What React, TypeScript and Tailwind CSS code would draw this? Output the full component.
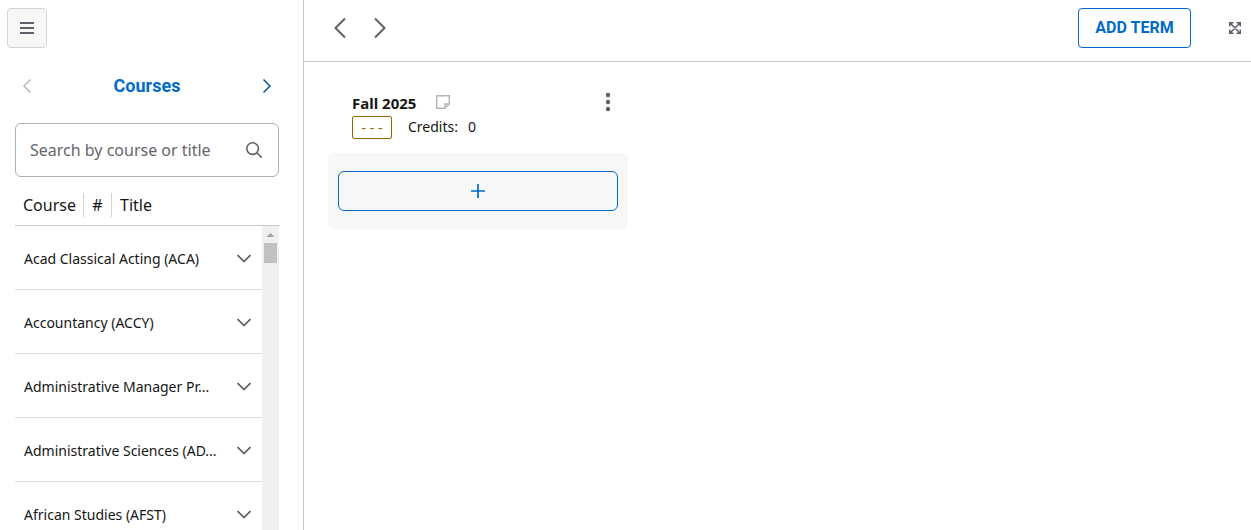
import React, { useState } from 'react';

const subjects = [
  'Acad Classical Acting (ACA)',
  'Accountancy (ACCY)',
  'Administrative Manager Pr...',
  'Administrative Sciences (AD...',
  'African Studies (AFST)',
];

type ChevronProps = {
  points: string;
  className: string;
  viewBox: string;
  strokeWidth?: number;
};

function Chevron({ points, className, viewBox, strokeWidth = 2 }: ChevronProps) {
  return (
    <svg className={className} viewBox={viewBox} fill="none" stroke="currentColor" strokeWidth={strokeWidth} aria-hidden="true">
      <polyline points={points} />
    </svg>
  );
}

function ListScrollbar() {
  return (
    <div className="flex w-[17px] shrink-0 flex-col items-center bg-[#f0f0f0]" aria-hidden="true">
      <svg className="h-[17px] w-[17px]" viewBox="0 0 17 17" fill="#a3a3a3">
        <path d="M8.5 7 L12.5 11 H4.5 Z" />
      </svg>
      <div className="h-5 w-[13px] bg-[#c1c1c1]" />
    </div>
  );
}

function Sidebar() {
  const [query, setQuery] = useState('');

  return (
    <aside className="flex w-[304px] shrink-0 flex-col border-r border-[#c7c7c7]">
      <div className="px-[7px] pt-2">
        <button
          aria-label="Menu"
          className="flex h-10 w-10 items-center justify-center rounded border border-[#d4d4d4] bg-[#f7f7f7] text-[#5f5f69]"
        >
          <svg className="h-4 w-4" viewBox="0 0 16 16" stroke="currentColor" strokeWidth="1.8" aria-hidden="true">
            <path d="M1 3H15M1 8H15M1 13H15" />
          </svg>
        </button>
      </div>

      <div className="mt-4 flex h-11 items-center justify-between pr-6 pl-[15px]">
        <button aria-label="Previous panel" disabled className="flex h-6 w-6 items-center justify-center text-[#b5b5b8]">
          <Chevron className="h-4 w-2" viewBox="0 0 8 16" points="7.5,1.5 1,8 7.5,14.5" strokeWidth={1.5} />
        </button>
        <h2 className="font-['Roboto',sans-serif] text-lg leading-6 font-bold text-[#006bc8]">Courses</h2>
        <button aria-label="Next panel" className="flex h-6 w-6 items-center justify-center text-[#00509a]">
          <Chevron className="h-4 w-2" viewBox="0 0 8 16" points="0.5,1.5 7,8 0.5,14.5" strokeWidth={1.5} />
        </button>
      </div>

      <div className="mt-[15px] mr-6 ml-[15px] flex h-[54px] items-center rounded-md border border-[#b1b1b4] pr-4 pl-[14px]">
        <input
          type="text"
          aria-label="Search by course or title"
          placeholder="Search by course or title"
          value={query}
          onChange={(e) => setQuery(e.target.value)}
          className="min-w-0 flex-1 bg-transparent text-base outline-none placeholder:text-[#66666c]"
        />
        <button aria-label="Search" className="text-[#5f5f69]">
          <svg className="h-4 w-4" viewBox="0 0 16 16" fill="none" stroke="currentColor" strokeWidth="1.6" aria-hidden="true">
            <circle cx="6.6" cy="6.6" r="5.8" />
            <path d="M10.8 10.8L15.6 15.6" />
          </svg>
        </button>
      </div>

      <div className="mt-4 mr-6 ml-[15px] flex h-[33px] items-start border-b border-[#c7c7c7] text-base leading-6">
        <button className="w-[69px] border-r border-[#d4d4d4] pl-2 text-left">Course</button>
        <button className="w-7 border-r border-[#d4d4d4] text-center">#</button>
        <button className="pl-2">Title</button>
      </div>

      <div className="mr-6 ml-[15px] flex min-h-0 flex-1 overflow-hidden">
        <ul className="min-w-0 flex-1">
          {subjects.map((name) => (
            <li key={name} className="border-b border-[#dcdcdc]">
              <button className="flex h-[63px] w-full items-center justify-between pt-0.5 pr-[11px] pl-[9px] text-sm">
                <span className="truncate">{name}</span>
                <Chevron
                  className="h-[9px] w-[14px] shrink-0 text-[#5f5f69]"
                  viewBox="0 0 14 9"
                  points="0.5,1 7,7.5 13.5,1"
                  strokeWidth={1.7}
                />
              </button>
            </li>
          ))}
        </ul>
        <ListScrollbar />
      </div>
    </aside>
  );
}

function TermCard() {
  return (
    <section className="w-[300px]">
      <div className="flex items-start justify-between pr-4 pl-6">
        <div>
          <div className="flex h-6 items-start gap-5">
            <h3 className="text-[15px] leading-[22px] font-bold">Fall 2025</h3>
            <button aria-label="Notes" className="flex h-5 items-center text-[#b5b5b8]">
              <svg className="h-[14px] w-[14px]" viewBox="0 0 14 14" fill="none" stroke="currentColor" strokeWidth="1.4" aria-hidden="true">
                <path d="M0.7 0.7H13.3V9L9 13.3H0.7ZM13.3 9H9V13.3" />
              </svg>
            </button>
          </div>
          <div className="flex items-start gap-4 text-sm">
            <span className="flex h-[23px] w-10 items-center justify-center rounded-xs border border-[#8f6900] text-[#8f6900]">
              - - -
            </span>
            <p className="flex gap-[10px] leading-[22px]">
              <span>Credits:</span>
              <span>0</span>
            </p>
          </div>
        </div>
        <button aria-label="Term options" className="flex h-5 w-2 items-center justify-center text-[#5f5f69]">
          <svg className="h-5 w-2 shrink-0" viewBox="0 0 8 20" fill="currentColor" aria-hidden="true">
            <circle cx="4" cy="3" r="2.2" />
            <circle cx="4" cy="10" r="2.2" />
            <circle cx="4" cy="17" r="2.2" />
          </svg>
        </button>
      </div>

      <div className="mt-[14px] rounded-md bg-[#f7f7f7] px-[10px] py-[18px]">
        <button
          aria-label="Add course"
          className="flex h-10 w-full items-center justify-center rounded-md border border-[#006bc8] text-[#006bc8]"
        >
          <svg className="h-[14px] w-[14px]" viewBox="0 0 14 14" stroke="currentColor" strokeWidth="1.7" aria-hidden="true">
            <path d="M7 0V14M0 7H14" />
          </svg>
        </button>
      </div>
    </section>
  );
}

export default function App() {
  return (
    <div className="flex h-screen overflow-hidden bg-white font-['Noto_Sans',sans-serif] text-[#161616]">
      <Sidebar />
      <main className="min-w-0 flex-1">
        <header className="flex h-[62px] items-start justify-between border-b border-[#c7c7c7] pt-2 pr-[10px] pl-5">
          <div className="flex h-10 items-center text-[#5f5f69]">
            <button aria-label="Previous terms" className="flex h-10 w-8 items-center justify-center">
              <Chevron className="h-[22px] w-3" viewBox="0 0 12 22" points="11,1.5 1.5,11 11,20.5" />
            </button>
            <button aria-label="Next terms" className="ml-2 flex h-10 w-8 items-center justify-center">
              <Chevron className="h-[22px] w-3" viewBox="0 0 12 22" points="1,1.5 10.5,11 1,20.5" />
            </button>
          </div>
          <div className="flex h-10 items-center gap-[38px]">
            <button className="h-10 w-[113px] rounded border border-[#006bc8] font-['Roboto',sans-serif] text-base font-bold text-[#006bc8]">
              ADD TERM
            </button>
            <button aria-label="Full screen" className="text-[#5f5f69]">
              <svg className="h-3 w-3" viewBox="0 0 12 12" fill="none" stroke="currentColor" strokeWidth="1.5" aria-hidden="true">
                <path d="M0.7 4.5V0.7H4.5M7.5 0.7H11.3V4.5M11.3 7.5V11.3H7.5M4.5 11.3H0.7V7.5M1 1L11 11M11 1L1 11" />
              </svg>
            </button>
          </div>
        </header>
        <div className="px-6 pt-[30px]">
          <TermCard />
        </div>
      </main>
    </div>
  );
}
